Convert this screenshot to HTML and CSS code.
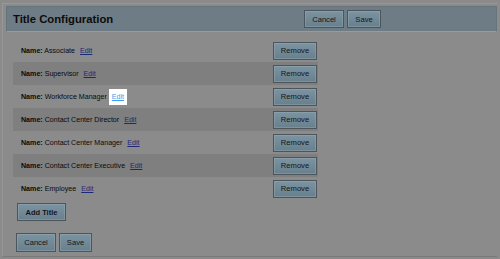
FILE: index.html
```html
<!DOCTYPE html>
<html>
<head>
<meta charset="utf-8">
<link rel="stylesheet" href="styles.css">
</head>
<body>
<div class="frame">
  <div class="header">
    <h1 class="title">Title Configuration</h1>
    <div class="actions">
      <button class="btn btn-cancel">Cancel</button>
      <button class="btn btn-save">Save</button>
    </div>
  </div>
  <div class="content">
    <div class="rows">
      <div class="row"><span class="label"><b>Name:</b> Associate</span><a class="edit" href="#">Edit</a><button class="btn btn-remove">Remove</button></div>
      <div class="row alt"><span class="label"><b>Name:</b> Supervisor</span><a class="edit" href="#">Edit</a><button class="btn btn-remove">Remove</button></div>
      <div class="row"><span class="label"><b>Name:</b> Workforce Manager</span><a class="edit hl" href="#">Edit</a><button class="btn btn-remove">Remove</button></div>
      <div class="row alt"><span class="label"><b>Name:</b> Contact Center Director</span><a class="edit" href="#">Edit</a><button class="btn btn-remove">Remove</button></div>
      <div class="row"><span class="label"><b>Name:</b> Contact Center Manager</span><a class="edit" href="#">Edit</a><button class="btn btn-remove">Remove</button></div>
      <div class="row alt"><span class="label"><b>Name:</b> Contact Center Executive</span><a class="edit" href="#">Edit</a><button class="btn btn-remove">Remove</button></div>
      <div class="row"><span class="label"><b>Name:</b> Employee</span><a class="edit" href="#">Edit</a><button class="btn btn-remove">Remove</button></div>
    </div>
    <button class="btn btn-add">Add Title</button>
    <div class="footer">
      <button class="btn btn-cancel">Cancel</button>
      <button class="btn btn-save">Save</button>
    </div>
  </div>
</div>
</body>
</html>
```
FILE: styles.css
```css
html, body {
  margin: 0;
  padding: 0;
  background: #8b8b8b;
  font-family: "Liberation Sans", Arial, sans-serif;
  color: #111;
}
.frame {
  box-sizing: border-box;
  margin: 3px 3px 0 2px;
  height: 254px;
  border: 1px solid #979797;
  border-right: none;
  border-bottom-color: #7a7a7a;
  padding: 2px 0 0 3px;
}
.header {
  box-sizing: border-box;
  height: 26px;
  display: flex;
  align-items: center;
  background: #6e7d85;
  border: 1px solid #66747b;
  border-bottom-color: #9a9a9a;
}
.title {
  margin: 0 0 0 6px;
  font-size: 11.3px;
  font-weight: bold;
  color: #0c0c0c;
}
.actions {
  margin-left: auto;
  margin-right: 115px;
  display: flex;
  gap: 3px;
}
.btn {
  box-sizing: border-box;
  height: 18px;
  padding: 0;
  border: 1px solid #4b555b;
  background: linear-gradient(#7c94a2, #687f8c);
  box-shadow: inset 0 0 0 1px rgba(160, 180, 190, 0.35);
  font-family: "Liberation Sans", Arial, sans-serif;
  font-size: 7.6px;
  color: #151515;
  cursor: pointer;
}
.btn-cancel { width: 40px; }
.btn-save { width: 34px; }
.content {
  padding: 7px 0 0 7px;
}
.rows {
  width: 305px;
}
.row {
  height: 23px;
  display: flex;
  align-items: center;
  padding-left: 8px;
  font-size: 7.1px;
  color: #0a0a0a;
}
.row.alt {
  background: #7f7f7f;
}
.label b {
  font-weight: bold;
}
.edit {
  margin-left: 5px;
  color: #1c2a76;
  text-decoration: underline;
}
.edit.hl {
  background: #ffffff;
  color: #3d9cf0;
  padding: 4px 3px;
  margin-left: 2px;
}
.btn-remove {
  margin-left: auto;
  margin-right: 1px;
  width: 44px;
}
.btn-add {
  margin: 3px 0 0 4px;
  width: 49px;
  font-weight: bold;
  font-size: 7.5px;
}
.footer {
  display: flex;
  gap: 3px;
  margin: 12px 0 0 3px;
}
.footer .btn {
  height: 19px;
}
.footer .btn-save { width: 33px; }
```
